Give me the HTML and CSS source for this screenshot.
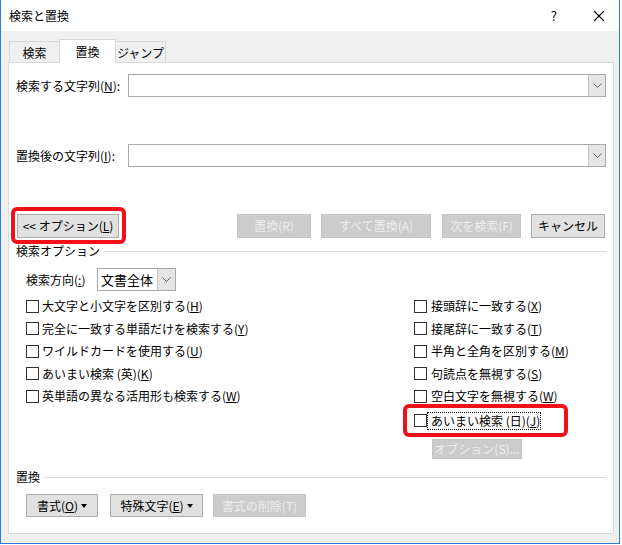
FILE: index.html
```html
<!DOCTYPE html>
<html lang="ja">
<head>
<meta charset="utf-8">
<title>検索と置換</title>
<link rel="stylesheet" href="styles.css">
</head>
<body>
<div class="window">
  <div class="titlebar">
    <span class="title">検索と置換</span>
    <span class="help">?</span>
    <span class="close"><svg width="12" height="12" viewBox="0 0 12 12"><path d="M1 1 L11 11 M11 1 L1 11" stroke="#000" stroke-width="1.1" fill="none"/></svg></span>
  </div>
  <div class="client">
    <div class="tabs">
      <div class="tab tab-first">検索</div>
      <div class="tab tab-active">置換</div>
      <div class="tab tab-last">ジャンプ</div>
    </div>
    <div class="panel">
      <div class="field-row first">
        <label class="field-label">検索する文字列(<u>N</u>):</label>
        <div class="combo">
          <span class="combo-text"></span>
          <span class="combo-btn"><svg width="9" height="5" viewBox="0 0 9 5"><path d="M0.5 0.5 L4.5 4.5 L8.5 0.5" stroke="#606060" stroke-width="1" fill="none"/></svg></span>
        </div>
      </div>
      <div class="field-row second">
        <label class="field-label">置換後の文字列(<u>I</u>):</label>
        <div class="combo">
          <span class="combo-text"></span>
          <span class="combo-btn"><svg width="9" height="5" viewBox="0 0 9 5"><path d="M0.5 0.5 L4.5 4.5 L8.5 0.5" stroke="#606060" stroke-width="1" fill="none"/></svg></span>
        </div>
      </div>
      <div class="button-row">
        <div class="btn btn-options">&lt;&lt; オプション(<u>L</u>)</div>
        <div class="btn disabled btn-replace">置換(R)</div>
        <div class="btn disabled btn-replace-all">すべて置換(A)</div>
        <div class="btn disabled btn-next">次を検索(F)</div>
        <div class="btn btn-cancel">キャンセル</div>
      </div>
      <div class="group-head head-search">
        <span class="group-label">検索オプション</span>
        <span class="group-line"></span>
      </div>
      <div class="direction-row">
        <span class="direction-label">検索方向(<u>:</u>)</span>
        <div class="select">
          <span class="select-text">文書全体</span>
          <span class="select-btn"><svg width="9" height="5" viewBox="0 0 9 5"><path d="M0.5 0.5 L4.5 4.5 L8.5 0.5" stroke="#606060" stroke-width="1" fill="none"/></svg></span>
        </div>
      </div>
      <div class="checks">
        <div class="check-col left">
          <div class="check"><span class="box"></span><span class="check-text">大文字と小文字を区別する(<u>H</u>)</span></div>
          <div class="check"><span class="box"></span><span class="check-text">完全に一致する単語だけを検索する(<u>Y</u>)</span></div>
          <div class="check"><span class="box"></span><span class="check-text">ワイルドカードを使用する(<u>U</u>)</span></div>
          <div class="check"><span class="box"></span><span class="check-text">あいまい検索 (英)(<u>K</u>)</span></div>
          <div class="check"><span class="box"></span><span class="check-text">英単語の異なる活用形も検索する(<u>W</u>)</span></div>
        </div>
        <div class="check-col right">
          <div class="check"><span class="box"></span><span class="check-text">接頭辞に一致する(<u>X</u>)</span></div>
          <div class="check"><span class="box"></span><span class="check-text">接尾辞に一致する(<u>T</u>)</span></div>
          <div class="check"><span class="box"></span><span class="check-text">半角と全角を区別する(<u>M</u>)</span></div>
          <div class="check"><span class="box"></span><span class="check-text">句読点を無視する(<u>S</u>)</span></div>
          <div class="check"><span class="box"></span><span class="check-text">空白文字を無視する(<u>W</u>)</span></div>
          <div class="check check-focus"><span class="box"></span><span class="check-text focus">あいまい検索 (日)(<u>J</u>)</span></div>
          <div class="btn disabled btn-sub-options">オプション(S)...</div>
        </div>
      </div>
      <div class="group-head head-replace">
        <span class="group-label">置換</span>
        <span class="group-line"></span>
      </div>
      <div class="bottom-row">
        <div class="btn btn-format">書式(<u>O</u>) <span class="caret"></span></div>
        <div class="btn btn-special">特殊文字(<u>E</u>) <span class="caret"></span></div>
        <div class="btn disabled btn-clear">書式の削除(T)</div>
      </div>
    </div>
  </div>
  <div class="mark mark-options"></div>
  <div class="mark mark-fuzzy"></div>
</div>
</body>
</html>
```

FILE: styles.css
```css
html, body {
  margin: 0;
  padding: 0;
  background: #ffffff;
}
body {
  width: 622px;
  height: 545px;
  overflow: hidden;
  font-family: "Noto Sans CJK JP", "Noto Sans", sans-serif;
  font-size: 12px;
  line-height: 14px;
  color: #000;
}
u {
  text-decoration: underline;
  text-underline-offset: 1px;
}
.window {
  position: relative;
  box-sizing: border-box;
  width: 620px;
  height: 544px;
  border-left: 1px solid #2b7fd6;
  border-right: 1px solid #2b7fd6;
  border-bottom: 1px solid #2b7fd6;
  background: #f0f0f0;
}
.titlebar {
  height: 31px;
  background: #fff;
  display: flex;
  align-items: center;
}
.title {
  margin-left: 8px;
  font-size: 12px;
}
.help {
  margin-left: auto;
  font-size: 13px;
  margin-right: 36px;
}
.close {
  display: flex;
  margin-right: 14px;
}
.client {
  height: 512px;
  padding: 8px 0 0 7px;
  box-sizing: border-box;
}
.tabs {
  display: flex;
  align-items: flex-end;
  height: 23px;
  padding-left: 1px;
}
.tab {
  box-sizing: border-box;
  height: 21px;
  border: 1px solid #d9d9d9;
  border-bottom: none;
  background: #f0f0f0;
  display: flex;
  align-items: center;
  justify-content: center;
  padding-top: 1px;
}
.tab-first {
  width: 50px;
  border-right: none;
}
.tab-active {
  width: 57px;
  height: 24px;
  background: #fff;
  margin-bottom: -1px;
  position: relative;
  z-index: 1;
  padding-top: 0;
}
.tab-last {
  width: 50px;
  border-left: none;
}
.panel {
  box-sizing: border-box;
  width: 606px;
  height: 472px;
  border: 1px solid #d9d9d9;
  background: #fff;
  padding-top: 11px;
}
.field-row {
  display: flex;
  align-items: center;
  height: 23px;
}
.field-row.second {
  margin-top: 47px;
}
.field-label {
  box-sizing: border-box;
  width: 119px;
  padding-left: 7px;
}
.combo {
  box-sizing: border-box;
  width: 478px;
  height: 23px;
  border: 1px solid #a9a9a9;
  display: flex;
  justify-content: flex-end;
  background: #fff;
}
.combo-btn {
  box-sizing: border-box;
  width: 17px;
  height: 21px;
  background: #e5e5e5;
  border-left: 1px solid #c4c4c4;
  display: flex;
  align-items: center;
  justify-content: center;
}
.btn {
  box-sizing: border-box;
  height: 24px;
  background: #e1e1e1;
  border: 1px solid #adadad;
  display: flex;
  align-items: center;
  justify-content: center;
  white-space: nowrap;
}
.btn.disabled {
  background: #cccccc;
  border-color: #c4c4c4;
  color: #ececec;
}
.button-row {
  display: flex;
  margin-top: 47px;
  height: 24px;
}
.btn-options {
  margin-left: 8px;
  width: 102px;
}
.btn-replace {
  margin-left: 118px;
  width: 74px;
}
.btn-replace-all {
  margin-left: 10px;
  width: 110px;
}
.btn-next {
  margin-left: 11px;
  width: 79px;
}
.btn-cancel {
  margin-left: 10px;
  width: 74px;
}
.group-head {
  display: flex;
  align-items: center;
  height: 14px;
  padding-left: 7px;
}
.head-search {
  margin-top: 6px;
}
.head-replace {
  margin-top: 11px;
}
.group-line {
  flex: 1;
  height: 1px;
  background: #dcdcdc;
  margin-left: 4px;
  margin-right: 7px;
}
.direction-row {
  display: flex;
  align-items: center;
  margin-top: 10px;
  height: 23px;
}
.direction-label {
  box-sizing: border-box;
  width: 88px;
  padding-left: 17px;
}
.select {
  box-sizing: border-box;
  width: 79px;
  height: 23px;
  border: 1px solid #a9a9a9;
  display: flex;
  align-items: center;
  background: #fff;
}
.select-text {
  flex: 1;
  padding-left: 3px;
  font-size: 13px;
}
.select-btn {
  box-sizing: border-box;
  width: 18px;
  height: 21px;
  background: #e5e5e5;
  border-left: 1px solid #c4c4c4;
  display: flex;
  align-items: center;
  justify-content: center;
}
.checks {
  display: flex;
  margin-top: 4px;
}
.check-col.left {
  box-sizing: border-box;
  width: 405px;
  padding-left: 17px;
}
.check-col.right {
  display: flex;
  flex-direction: column;
}
.check {
  display: flex;
  align-items: center;
  height: 22.5px;
}
.check-focus {
  margin-top: 2px;
}
.box {
  box-sizing: border-box;
  width: 13px;
  height: 13px;
  border: 1px solid #333;
  background: #fff;
  flex: none;
}
.left .check-text {
  margin-left: 3px;
}
.right .check-text {
  margin-left: 4px;
}
.right .check-text.focus {
  margin-left: 1px;
  padding: 1px 0 1px 3px;
  outline: 1px dotted #000;
  outline-offset: 0;
}
.btn-sub-options {
  margin-top: 7px;
  margin-left: 18px;
  width: 90px;
  height: 20px;
}
.bottom-row {
  display: flex;
  margin-top: 10px;
  padding-left: 17px;
}
.bottom-row .btn {
  height: 23px;
}
.btn-format {
  width: 72px;
}
.btn-special {
  margin-left: 12px;
  width: 93px;
}
.btn-clear {
  margin-left: 10px;
  width: 93px;
}
.caret {
  display: inline-block;
  width: 0;
  height: 0;
  border-left: 3.5px solid transparent;
  border-right: 3.5px solid transparent;
  border-top: 4px solid #000;
  margin-left: 3px;
}
.mark {
  position: absolute;
  box-sizing: border-box;
  border: 4px solid #ef1018;
  border-radius: 6px;
}
.mark-options {
  left: 10px;
  top: 207px;
  width: 115px;
  height: 37px;
}
.mark-fuzzy {
  left: 402px;
  top: 404px;
  width: 165px;
  height: 33px;
}
```
